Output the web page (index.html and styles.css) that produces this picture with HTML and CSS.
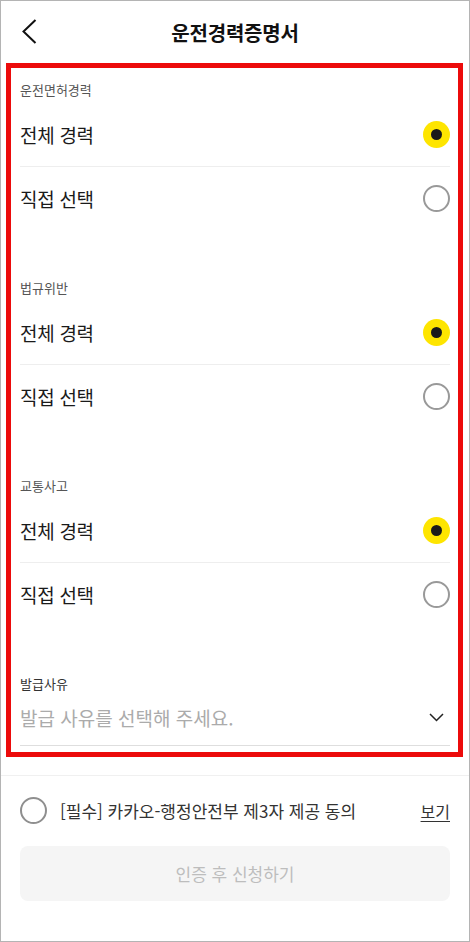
FILE: index.html
```html
<!DOCTYPE html>
<html lang="ko">
<head>
<meta charset="utf-8">
<title>운전경력증명서</title>
<link rel="stylesheet" href="styles.css">
</head>
<body>
<header class="header">
  <div class="header-left">
    <svg class="back" width="20" height="28" viewBox="0 0 20 28" aria-hidden="true"><path d="M16.5 2 L4.5 13.5 L16.5 25" fill="none" stroke="#111" stroke-width="2"/></svg>
  </div>
  <h1 class="title">운전경력증명서</h1>
  <div class="header-right"></div>
</header>

<main class="form">
  <section class="group">
    <div class="label">운전면허경력</div>
    <div class="option option-divided"><span class="option-text">전체 경력</span><span class="radio radio-on"></span></div>
    <div class="option"><span class="option-text">직접 선택</span><span class="radio"></span></div>
  </section>
  <section class="group">
    <div class="label">법규위반</div>
    <div class="option option-divided"><span class="option-text">전체 경력</span><span class="radio radio-on"></span></div>
    <div class="option"><span class="option-text">직접 선택</span><span class="radio"></span></div>
  </section>
  <section class="group">
    <div class="label">교통사고</div>
    <div class="option option-divided"><span class="option-text">전체 경력</span><span class="radio radio-on"></span></div>
    <div class="option"><span class="option-text">직접 선택</span><span class="radio"></span></div>
  </section>
  <section class="group">
    <div class="label label-dark">발급사유</div>
    <div class="select">
      <span class="placeholder">발급 사유를 선택해 주세요.</span>
      <svg class="chev" width="15" height="9" viewBox="0 0 15 9" aria-hidden="true"><path d="M1 1 L7.5 7.5 L14 1" fill="none" stroke="#222" stroke-width="1.5"/></svg>
    </div>
  </section>
</main>

<div class="divider"></div>

<div class="agree">
  <span class="radio"></span>
  <span class="agree-text">[필수] 카카오-행정안전부 제3자 제공 동의</span>
  <span class="agree-link">보기</span>
</div>

<div class="submit">인증 후 신청하기</div>
</body>
</html>
```

FILE: styles.css
```css
* { box-sizing: border-box; }
html, body { margin: 0; padding: 0; }
body {
  width: 470px;
  height: 942px;
  border: 1px solid #b4b4b4;
  background: #fff;
  overflow: hidden;
  font-family: "Noto Sans CJK KR", "Noto Sans", sans-serif;
  color: #222;
}

.header {
  height: 62px;
  display: grid;
  grid-template-columns: 1fr auto 1fr;
  align-items: center;
}
.header-left { padding-left: 18px; display: flex; align-items: center; }
.back { display: block; }
.title {
  margin: 0;
  font-size: 20px;
  font-weight: 700;
  color: #111;
  letter-spacing: -0.2px;
}

.form {
  margin: 0 6px 0 5px;
  border: 5px solid #ec0b0b;
  padding: 0 8px 6px 9px;
}
.group { padding-top: 13px; }
.group + .group { margin-top: 36px; }
.label {
  font-size: 13px;
  line-height: 18px;
  color: #555;
  margin-bottom: 4px;
}
.label-dark { color: #333; }

.option {
  height: 63px;
  display: flex;
  align-items: center;
  justify-content: space-between;
}
.option-divided {
  height: 64px;
  border-bottom: 1px solid #eeeeee;
}
.option-text {
  font-size: 19px;
  color: #1a1a1a;
  letter-spacing: -0.3px;
}

.radio {
  width: 27px;
  height: 27px;
  border-radius: 50%;
  border: 2px solid #999;
  flex: none;
  display: flex;
  align-items: center;
  justify-content: center;
}
.radio-on {
  border: none;
  background: #fee500;
}
.radio-on::after {
  content: "";
  width: 11px;
  height: 11px;
  border-radius: 50%;
  background: #1a1a1a;
}

.select {
  margin-top: 4px;
  height: 49px;
  padding-bottom: 7px;
  border-bottom: 1px solid #dedede;
  display: flex;
  align-items: center;
  justify-content: space-between;
}
.placeholder {
  font-size: 19px;
  color: #ababab;
}
.chev { margin-right: 6px; display: block; }

.divider {
  margin-top: 18px;
  height: 1px;
  background: #f0f0f0;
}

.agree {
  padding: 21px 19px 0 19px;
  display: flex;
  align-items: center;
  height: 48px;
}
.agree .radio { border-color: #8f8f8f; }
.agree-text {
  margin-left: 13px;
  font-size: 17px;
  color: #333;
  flex: 1;
}
.agree-link {
  font-size: 16px;
  color: #333;
  text-decoration: underline;
  text-underline-offset: 3px;
}

.submit {
  margin: 22px 19px 0;
  height: 55px;
  border-radius: 8px;
  background: #f5f5f5;
  color: #bdbdbd;
  font-size: 17px;
  display: flex;
  align-items: center;
  justify-content: center;
}
```
